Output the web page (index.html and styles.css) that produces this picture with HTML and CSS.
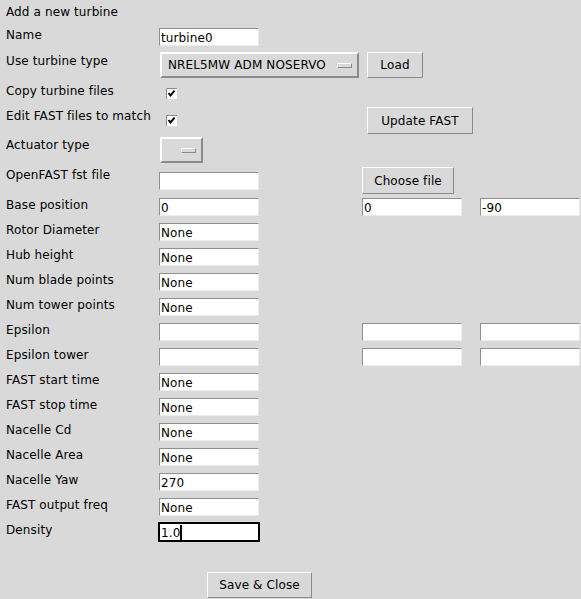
FILE: index.html
```html
<!DOCTYPE html>
<html>
<head>
<meta charset="utf-8">
<title>Add a new turbine</title>
<link rel="stylesheet" href="styles.css">
</head>
<body>
<div class="form">
  <div class="row r-title"><div class="lbl title">Add a new turbine</div></div>

  <div class="row r-name">
    <div class="lbl m1">Name</div>
    <div class="cell"><div class="entry m1">turbine0</div></div>
  </div>

  <div class="row r-type">
    <div class="lbl m3">Use turbine type</div>
    <div class="cell"><div class="opt wide m1"><span>NREL5MW ADM NOSERVO</span><span class="ind"></span></div></div>
    <div class="cell"><div class="btn load m1 ml5">Load</div></div>
  </div>

  <div class="row r-copy">
    <div class="lbl m4">Copy turbine files</div>
    <div class="cell"><svg class="chk m8" width="11" height="11" viewBox="0 0 11 11"><rect x="0" y="0" width="11" height="11" fill="#ffffff"/><path d="M0.5 11V0.5H11" fill="none" stroke="#8a8a8a" stroke-width="1"/><polyline points="2.5,5 4.5,7.5 8.6,2.6" fill="none" stroke="#000" stroke-width="2"/></svg></div>
  </div>

  <div class="row r-edit">
    <div class="lbl m5">Edit FAST files to match</div>
    <div class="cell"><svg class="chk m11" width="11" height="11" viewBox="0 0 11 11"><rect x="0" y="0" width="11" height="11" fill="#ffffff"/><path d="M0.5 11V0.5H11" fill="none" stroke="#8a8a8a" stroke-width="1"/><polyline points="2.5,5 4.5,7.5 8.6,2.6" fill="none" stroke="#000" stroke-width="2"/></svg></div>
    <div class="cell"><div class="btn update m3 ml5">Update FAST</div></div>
  </div>

  <div class="row r-act">
    <div class="lbl m2">Actuator type</div>
    <div class="cell"><div class="opt narrow m1"><span class="ind"></span></div></div>
  </div>

  <div class="row r-fst">
    <div class="lbl m3">OpenFAST fst file</div>
    <div class="cell"><div class="entry m7"></div></div>
    <div class="cell"><div class="btn choose m2">Choose file</div></div>
  </div>

  <div class="row r-e">
    <div class="lbl m2">Base position</div>
    <div class="cell"><div class="entry m2">0</div></div>
    <div class="cell"><div class="entry m2">0</div></div>
    <div class="cell"><div class="entry m2">-90</div></div>
  </div>
  <div class="row r-e"><div class="lbl m2">Rotor Diameter</div><div class="cell"><div class="entry m2">None</div></div></div>
  <div class="row r-e"><div class="lbl m2">Hub height</div><div class="cell"><div class="entry m2">None</div></div></div>
  <div class="row r-e"><div class="lbl m2">Num blade points</div><div class="cell"><div class="entry m2">None</div></div></div>
  <div class="row r-e"><div class="lbl m2">Num tower points</div><div class="cell"><div class="entry m2">None</div></div></div>
  <div class="row r-e">
    <div class="lbl m2">Epsilon</div>
    <div class="cell"><div class="entry m2"></div></div>
    <div class="cell"><div class="entry m2"></div></div>
    <div class="cell"><div class="entry m2"></div></div>
  </div>
  <div class="row r-e">
    <div class="lbl m2">Epsilon tower</div>
    <div class="cell"><div class="entry m2"></div></div>
    <div class="cell"><div class="entry m2"></div></div>
    <div class="cell"><div class="entry m2"></div></div>
  </div>
  <div class="row r-e"><div class="lbl m2">FAST start time</div><div class="cell"><div class="entry m2">None</div></div></div>
  <div class="row r-e"><div class="lbl m2">FAST stop time</div><div class="cell"><div class="entry m2">None</div></div></div>
  <div class="row r-e"><div class="lbl m2">Nacelle Cd</div><div class="cell"><div class="entry m2">None</div></div></div>
  <div class="row r-e"><div class="lbl m2">Nacelle Area</div><div class="cell"><div class="entry m2">None</div></div></div>
  <div class="row r-e"><div class="lbl m2">Nacelle Yaw</div><div class="cell"><div class="entry m2">270</div></div></div>
  <div class="row r-e"><div class="lbl m2">FAST output freq</div><div class="cell"><div class="entry m2">None</div></div></div>
  <div class="row r-e"><div class="lbl m2">Density</div><div class="cell"><div class="entry focus m2"><span>1.0</span><span class="caret"></span></div></div></div>

  <div class="save-row"><div class="btn save">Save &amp; Close</div></div>
</div>
</body>
</html>
```

FILE: styles.css
```css
html, body {
  margin: 0;
  padding: 0;
  background: #d9d9d9;
}
body {
  font-family: "DejaVu Sans", sans-serif;
  font-size: 12px;
  line-height: 14px;
  letter-spacing: 0.12px;
  color: #000;
  width: 581px;
  height: 599px;
  overflow: hidden;
}
.form {
  display: flex;
  flex-direction: column;
}
.row {
  display: grid;
  grid-template-columns: 159px 203px 118px 101px;
  align-items: start;
}
.r-title { height: 27px; }
.r-name { height: 24px; }
.r-type { height: 29px; }
.r-copy { height: 24px; }
.r-edit { height: 32px; }
.r-act { height: 29px; }
.r-fst { height: 31px; }
.r-e { height: 25px; }

.lbl {
  padding-left: 6px;
  white-space: nowrap;
}
.title { margin-top: 5px; grid-column: 1 / -1; }

.cell { display: flex; align-items: flex-start; }

.m1 { margin-top: 1px; }
.m2 { margin-top: 2px; }
.m3 { margin-top: 3px; }
.m4 { margin-top: 4px; }
.m5 { margin-top: 5px; }
.m7 { margin-top: 7px; }
.m8 { margin-top: 8px; }
.m11 { margin-top: 11px; }
.ml5 { margin-left: 5px; }

.entry {
  box-sizing: border-box;
  width: 100px;
  height: 18px;
  background: #fff;
  border-top: 1px solid #8f8f8f;
  border-left: 1px solid #8f8f8f;
  border-right: 1px solid #ececec;
  border-bottom: 1px solid #ececec;
  padding: 2px 0 0 1px;
  display: flex;
  align-items: flex-start;
  white-space: nowrap;
  overflow: hidden;
  line-height: 14px;
}
.entry.focus {
  border: 1px solid #000;
  outline: 1px solid #000;
}
.caret {
  display: inline-block;
  width: 2px;
  height: 15px;
  margin-top: -1px;
  background: #000;
}

.chk { display: block; margin-left: 7px; }

.opt {
  box-sizing: border-box;
  height: 26px;
  margin-left: 1px;
  border-top: 2px solid #ffffff;
  border-left: 2px solid #ffffff;
  border-right: 2px solid #8a8a8a;
  border-bottom: 2px solid #8a8a8a;
  background: #d9d9d9;
  display: flex;
  align-items: center;
  padding-left: 6px;
  white-space: nowrap;
}
.opt.wide { width: 199px; }
.opt.narrow { width: 43px; }
.ind {
  box-sizing: border-box;
  width: 15px;
  height: 5px;
  margin-left: auto;
  margin-right: 5px;
  border-top: 1px solid #ffffff;
  border-left: 1px solid #ffffff;
  border-right: 1px solid #8a8a8a;
  border-bottom: 1px solid #8a8a8a;
  background: #d9d9d9;
}

.btn {
  box-sizing: border-box;
  background: #d9d9d9;
  border-top: 1px solid #ffffff;
  border-left: 1px solid #ffffff;
  border-right: 1px solid #8a8a8a;
  border-bottom: 1px solid #8a8a8a;
  display: flex;
  align-items: center;
  justify-content: center;
  white-space: nowrap;
}
.load { width: 56px; height: 26px; }
.update { width: 106px; height: 27px; }
.choose { width: 92px; height: 27px; }
.save { width: 105px; height: 26px; }

.save-row {
  display: flex;
  padding-top: 26px;
  padding-left: 207px;
}
```
